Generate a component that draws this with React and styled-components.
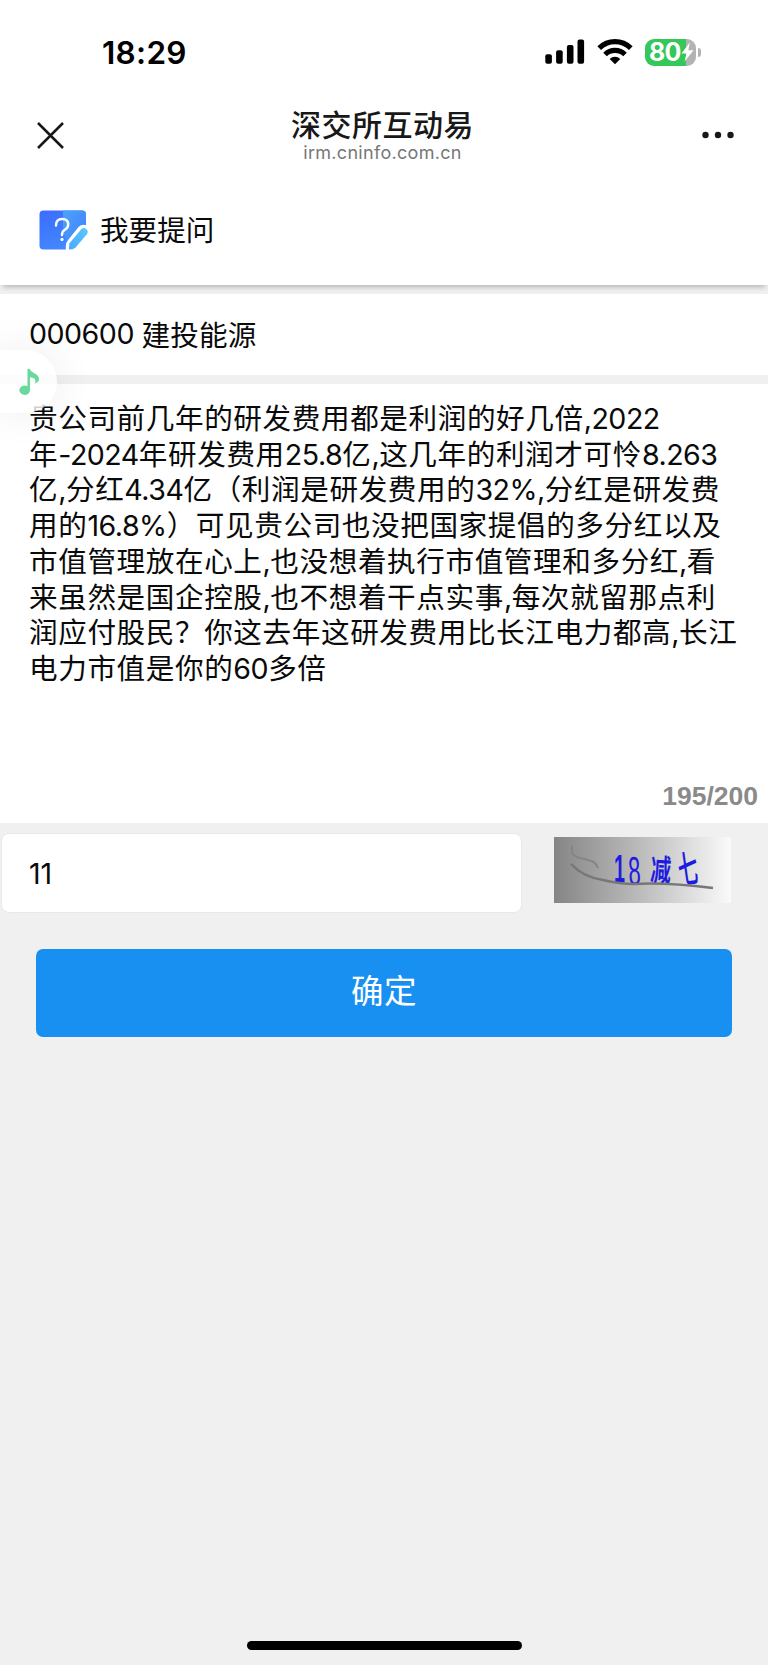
import React from 'react';
import styled, { createGlobalStyle } from 'styled-components';

const QUESTION = [
  '贵公司前几年的研发费用都是利润的好几倍,2022',
  '年-2024年研发费用25.8亿,这几年的利润才可怜8.263',
  '亿,分红4.34亿（利润是研发费用的32%,分红是研发费',
  '用的16.8%）可见贵公司也没把国家提倡的多分红以及',
  '市值管理放在心上,也没想着执行市值管理和多分红,看',
  '来虽然是国企控股,也不想着干点实事,每次就留那点利',
  '润应付股民？你这去年这研发费用比长江电力都高,长江',
  '电力市值是你的60多倍',
];

// Latin runs are tracked differently from the Chinese text around them
const Mixed = ({ text }) =>
  text
    .split(/([\x20-\x7e]+)/)
    .map((part, index) =>
      index % 2 ? <Latin key={index}>{part}</Latin> : part
    );

const SignalIcon = () => (
  <svg width="40" height="26" viewBox="0 0 40 26">
    <rect x="0.3" y="15.3" width="6.6" height="9.5" rx="2" />
    <rect x="11.1" y="11.2" width="6.6" height="13.6" rx="2" />
    <rect x="21.9" y="6" width="6.6" height="18.8" rx="2" />
    <rect x="32.5" y="0.4" width="6.6" height="24.4" rx="2" />
  </svg>
);

const WifiIcon = () => (
  <svg width="36" height="26" viewBox="0 0 36 26">
    <g fill="none" stroke="#000" strokeWidth="5.2">
      <path d="M2.2 9.2A22.5 22.5 0 0 1 33.8 9.2" />
      <path d="M8 15.5A14.4 14.4 0 0 1 28 15.5" />
    </g>
    <path d="M18 25.2L12.7 19.9A7.6 7.6 0 0 1 23.3 19.9Z" />
  </svg>
);

const BoltIcon = () => (
  <svg width="13" height="20" viewBox="0 0 13 20">
    <path
      d="M8.8 0.5L0.5 11.4H5.4L3.6 19.5L12.5 8.2H7.3Z"
      fill="#fff"
    />
  </svg>
);

const CloseIcon = () => (
  <svg width="27" height="27" viewBox="0 0 27 27">
    <path
      d="M1 1L26 26M26 1L1 26"
      fill="none"
      stroke="#181818"
      strokeWidth="2.5"
    />
  </svg>
);

const MoreIcon = () => (
  <svg width="34" height="8" viewBox="0 0 34 8">
    <circle cx="4.5" cy="4" r="3.2" fill="#181818" />
    <circle cx="17" cy="4" r="3.2" fill="#181818" />
    <circle cx="29.5" cy="4" r="3.2" fill="#181818" />
  </svg>
);

const AskIcon = () => (
  <svg width="50" height="40" viewBox="0 0 50 40">
    <defs>
      <linearGradient id="ask-dark" x1="0" y1="0" x2="0.4" y2="1">
        <stop offset="0" stopColor="#3c6cfe" />
        <stop offset="1" stopColor="#4288fd" />
      </linearGradient>
      <linearGradient id="ask-light" x1="0.2" y1="0" x2="0.8" y2="0.6">
        <stop offset="0" stopColor="#4a9ffb" />
        <stop offset="1" stopColor="#4288fd" />
      </linearGradient>
      <linearGradient id="ask-pen" x1="1" y1="0" x2="0" y2="1">
        <stop offset="0" stopColor="#5bc8fb" />
        <stop offset="1" stopColor="#4ba8fc" />
      </linearGradient>
    </defs>
    <rect x="0.5" y="0.5" width="46.5" height="39" rx="4" fill="url(#ask-dark)" />
    <path
      d="M24 0.5H43A4 4 0 0 1 47 4.5V39.5H33Q24 28 24 16Z"
      fill="url(#ask-light)"
    />
    <path
      d="M17 15.5Q17 9 23.2 9Q29.2 9 29.2 14.5Q29.2 18 25.5 20Q23 21.5 23 25"
      fill="none"
      stroke="#fff"
      strokeWidth="2.4"
      strokeLinecap="round"
    />
    <circle cx="23" cy="29.4" r="1.6" fill="#fff" />
    <path
      d="M26.8 40.5V36Q26.8 32.5 29.5 29.5L39.5 17Q43.5 13 48.5 16V40.5Z"
      fill="#fff"
    />
    <path
      d="M29.8 39.6L30.5 33.3L42 19.4Q44.5 17 47.2 19Q50 21.4 47.8 24.3L36.4 37.7Q33.8 39.5 29.8 39.6Z"
      fill="url(#ask-pen)"
    />
  </svg>
);

const NoteIcon = () => (
  <svg width="21" height="28" viewBox="0 0 21 28">
    <path
      d="M8.5 0.8H10.6C12 5.6 20 5.4 20 11.2Q20 14 15.8 15.4Q18.4 10.2 11 9.3V22A5.3 4.7 0 1 1 8.5 18.2Z"
      fill="#68d89d"
    />
  </svg>
);

const CaptchaArt = () => (
  <svg width="177" height="66" viewBox="0 0 177 66">
    <defs>
      <linearGradient id="captcha-bg">
        <stop offset="0" stopColor="#858585" />
        <stop offset="0.5" stopColor="#bdbdbd" />
        <stop offset="1" stopColor="#fafafa" />
      </linearGradient>
    </defs>
    <rect width="177" height="66" fill="url(#captcha-bg)" />
    <path
      d="M18 9V16Q20 20 32 22.5Q42 24 44 31"
      fill="none"
      stroke="#858585"
      strokeWidth="2"
    />
    <g
      fill="#1d1be0"
      fontFamily='"Liberation Sans", "Noto Sans CJK SC", sans-serif'
    >
      <text transform="translate(60 45) scale(0.52 1)" fontSize="38" fontWeight="700">
        1
      </text>
      <text transform="translate(75 48) rotate(-3) scale(0.55 1)" fontSize="40">
        8
      </text>
      <text
        transform="translate(96 44) rotate(3) scale(0.66 1)"
        fontSize="31"
        fontWeight="700"
      >
        减
      </text>
      <text
        transform="translate(126 47) rotate(-8) scale(0.62 1.18)"
        fontSize="32"
        fontWeight="500"
      >
        七
      </text>
    </g>
    <path
      d="M17 27Q29 40 49 43Q66 47 80 47Q110 45 159 51"
      fill="none"
      stroke="#777"
      strokeWidth="2.5"
    />
  </svg>
);

const App = () => (
  <Page>
    <GlobalStyle />
    <StatusBar>
      <Clock>18:29</Clock>
      <StatusIcons>
        <SignalIcon />
        <WifiIcon />
        <Battery>
          <BatteryBody>
            80
            <BoltIcon />
          </BatteryBody>
          <BatteryCap />
        </Battery>
      </StatusIcons>
    </StatusBar>
    <TitleBar>
      <CloseIcon />
      <TitleBlock>
        <Title>深交所互动易</Title>
        <Domain>irm.cninfo.com.cn</Domain>
      </TitleBlock>
      <MoreIcon />
    </TitleBar>
    <AskHeader>
      <AskIcon />
      <AskTitle>我要提问</AskTitle>
    </AskHeader>
    <StockRow>
      <Mixed text="000600 建投能源" />
      <MusicBubble>
        <NoteIcon />
      </MusicBubble>
    </StockRow>
    <QuestionBox>
      <div>
        {QUESTION.map((line) => (
          <Line key={line}>
            <Mixed text={line} />
          </Line>
        ))}
      </div>
      <Counter>195/200</Counter>
    </QuestionBox>
    <CaptchaRow>
      <CaptchaInput>11</CaptchaInput>
      <CaptchaArt />
    </CaptchaRow>
    <SubmitButton>确定</SubmitButton>
    <HomeIndicator />
  </Page>
);

const GlobalStyle = createGlobalStyle`
  * {
    box-sizing: border-box;
  }

  body {
    margin: 0;
    background-color: #f0f0f0;
  }

  svg {
    display: block;
    flex-shrink: 0;
  }
`;

const Page = styled.div`
  display: flex;
  flex-direction: column;
  width: 768px;
  height: 1665px;
  overflow: hidden;
  background-color: #f0f0f0;
  color: #0a0a0a;
  font-family: Inter, 'Noto Sans CJK SC', sans-serif;
  font-size: 28.6px;
  letter-spacing: 0.6px;
`;

const Latin = styled.span`
  letter-spacing: -0.5px;
`;

const StatusBar = styled.div`
  display: flex;
  justify-content: space-between;
  align-items: center;
  height: 104px;
  padding: 0 67px 0 102px;
  background-color: #fff;
`;

const Clock = styled.div`
  font-size: 31.5px;
  font-weight: 600;
  letter-spacing: 0.3px;
  color: #000;
`;

const StatusIcons = styled.div`
  display: flex;
  align-items: center;
  gap: 12px;
`;

const Battery = styled.div`
  display: flex;
  align-items: center;
  gap: 2px;
`;

const BatteryBody = styled.div`
  display: flex;
  align-items: center;
  width: 51px;
  height: 27px;
  padding-left: 4px;
  border-radius: 9px;
  background: linear-gradient(90deg, #34c759 80%, #b3b3b3 80%);
  color: #fff;
  font-size: 25px;
  font-weight: 700;
  letter-spacing: -0.8px;
`;

const BatteryCap = styled.div`
  width: 3px;
  height: 9px;
  border-radius: 0 4px 4px 0;
  background-color: #b3b3b3;
`;

const TitleBar = styled.div`
  display: flex;
  justify-content: space-between;
  align-items: center;
  height: 62px;
  padding: 0 33px 0 37px;
  background-color: #fff;
`;

const TitleBlock = styled.div`
  display: flex;
  flex-direction: column;
  align-items: center;
  padding-bottom: 1px;
`;

const Title = styled.div`
  color: #181818;
  font-size: 30px;
  font-weight: 500;
  line-height: 36px;
  letter-spacing: 0.5px;
`;

const Domain = styled.div`
  color: #777;
  font-size: 18px;
  line-height: 20px;
  letter-spacing: 0.3px;
`;

const AskHeader = styled.div`
  display: flex;
  align-items: center;
  gap: 11px;
  height: 119px;
  padding: 9px 39px 0;
  background-color: #fff;
  box-shadow: 0 5px 5px -3px rgba(0, 0, 0, 0.25);
`;

const AskTitle = styled.div`
  margin-top: -3px;
  letter-spacing: 0;
`;

const StockRow = styled.div`
  position: relative;
  display: flex;
  align-items: center;
  white-space: pre;
  height: 81px;
  margin-top: 9px;
  padding: 0 0 2px 29px;
  background-color: #fff;
  letter-spacing: 0.2px;
`;

const MusicBubble = styled.div`
  position: absolute;
  z-index: 1;
  left: 0;
  top: 56px;
  display: flex;
  align-items: center;
  width: 57px;
  height: 63px;
  padding-left: 19px;
  border-radius: 0 32px 32px 0;
  background-color: rgba(255, 255, 255, 0.8);
  box-shadow: 0 0 42px rgba(0, 0, 0, 0.08);
`;

const QuestionBox = styled.div`
  display: flex;
  flex-direction: column;
  justify-content: space-between;
  height: 439px;
  margin-top: 9px;
  padding: 17px 10px 9px 29px;
  background-color: #fff;
`;

const Line = styled.div`
  height: 35.72px;
  line-height: 35.72px;
  white-space: nowrap;
`;

const Counter = styled.div`
  align-self: flex-end;
  color: #8a8a8a;
  font-family: 'Liberation Sans', Arial, sans-serif;
  font-size: 26.5px;
  font-weight: 700;
  line-height: 36px;
  letter-spacing: 0;
`;

const CaptchaRow = styled.div`
  display: flex;
  align-items: flex-start;
  justify-content: space-between;
  padding: 10px 37px 0 1px;

  svg {
    margin-top: 4px;
  }
`;

const CaptchaInput = styled.div`
  display: flex;
  align-items: center;
  width: 521px;
  height: 80px;
  padding-left: 27px;
  border: 1px solid #e9e9e9;
  border-radius: 8px;
  background-color: #fff;
  letter-spacing: -0.1px;
`;

const SubmitButton = styled.button`
  height: 88px;
  margin: 36px 36px 0;
  padding: 0 0 9px;
  border: 0;
  border-radius: 7px;
  background-color: #1790f2;
  color: #fff;
  font-family: inherit;
  font-size: 32.5px;
  letter-spacing: 0.5px;
`;

const HomeIndicator = styled.div`
  align-self: center;
  width: 275px;
  height: 9px;
  margin: auto 0 15px;
  border-radius: 5px;
  background-color: #000;
`;

export default App;
